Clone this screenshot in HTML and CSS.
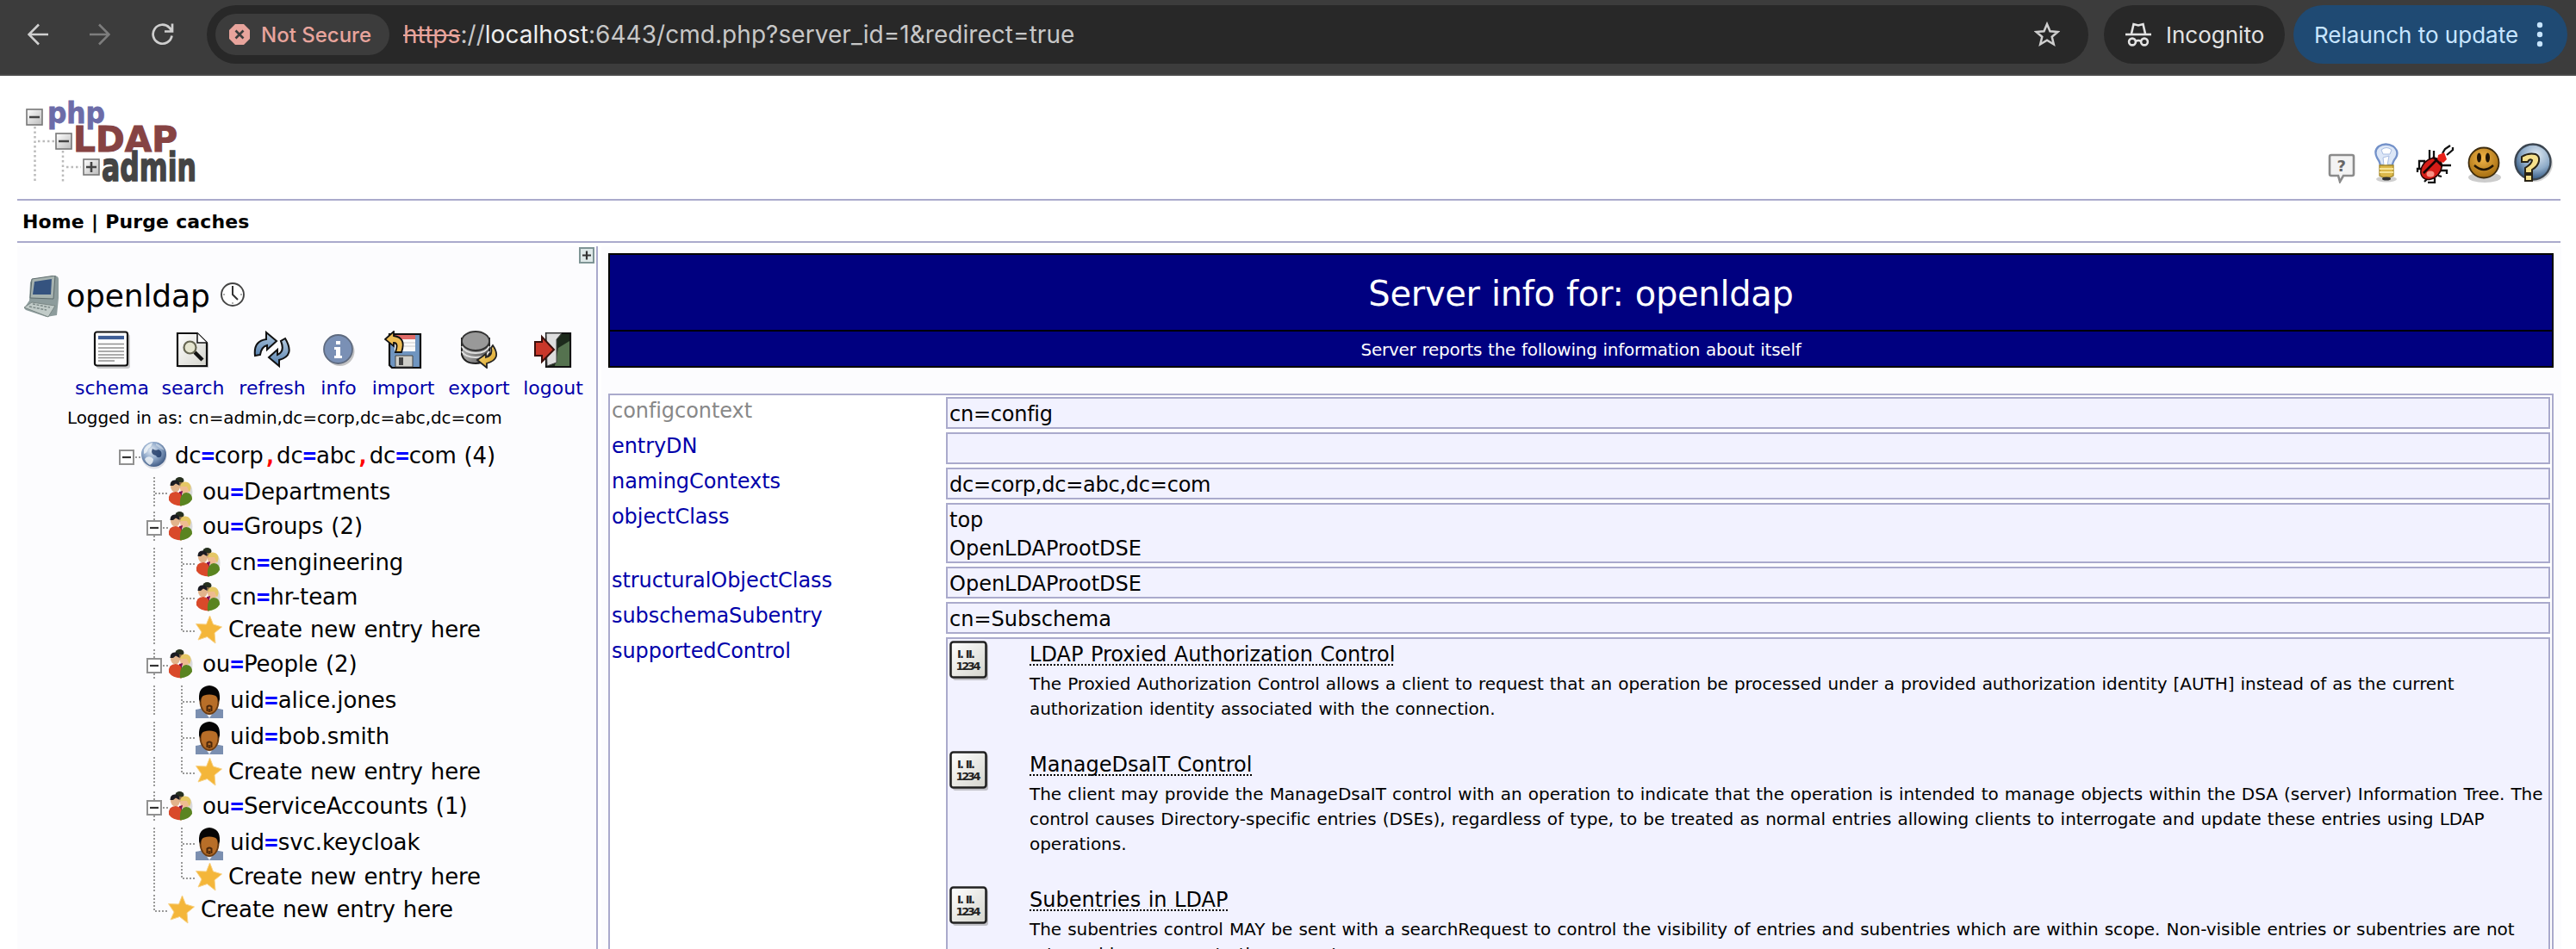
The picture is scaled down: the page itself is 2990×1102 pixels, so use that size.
FILE: index.html
```html
<!DOCTYPE html>
<html lang="en">
<head>
<meta charset="utf-8">
<title>phpLDAPadmin</title>
<link rel="stylesheet" href="styles.css">
</head>
<body>
<svg class="defs" width="0" height="0" aria-hidden="true">
  <defs>
    <linearGradient id="gPaper" x1="0" y1="0" x2="1" y2="1"><stop offset="0" stop-color="#fff"/><stop offset="1" stop-color="#d4d4cc"/></linearGradient>
    <linearGradient id="gBlue" x1="0" y1="0" x2="0" y2="1"><stop offset="0" stop-color="#b5cbe0"/><stop offset="1" stop-color="#5580ae"/></linearGradient>
    <radialGradient id="gGlobe" cx=".4" cy=".35" r=".7"><stop offset="0" stop-color="#e4ecf5"/><stop offset=".5" stop-color="#8fa8c9"/><stop offset="1" stop-color="#3a557f"/></radialGradient>
    <radialGradient id="gSmile" cx=".45" cy=".35" r=".65"><stop offset="0" stop-color="#f2b548"/><stop offset="1" stop-color="#a56d10"/></radialGradient>
    <radialGradient id="gHelp" cx=".6" cy=".3" r=".75"><stop offset="0" stop-color="#dfe9f2"/><stop offset=".55" stop-color="#8eabc8"/><stop offset="1" stop-color="#234a76"/></radialGradient>
    <linearGradient id="gYel" x1="0" y1="0" x2="1" y2="1"><stop offset="0" stop-color="#fbe08a"/><stop offset="1" stop-color="#d79d1c"/></linearGradient>
    <linearGradient id="gDisk" x1="0" y1="0" x2="1" y2="0"><stop offset="0" stop-color="#a9a9a9"/><stop offset="1" stop-color="#555"/></linearGradient>
    <linearGradient id="gBox" x1="0" y1="0" x2="1" y2="1"><stop offset="0" stop-color="#fff"/><stop offset="1" stop-color="#bbb"/></linearGradient>
    <symbol id="guide-tee" viewBox="0 0 32 34"><path d="M16 0V34M17 19H32" stroke="#999" stroke-width="2" stroke-dasharray="2 2" fill="none"/></symbol>
    <symbol id="guide-line" viewBox="0 0 32 34"><path d="M16 0V34" stroke="#999" stroke-width="2" stroke-dasharray="2 2" fill="none"/></symbol>
    <symbol id="guide-end" viewBox="0 0 32 34"><path d="M16 0V20M17 19H32" stroke="#999" stroke-width="2" stroke-dasharray="2 2" fill="none"/></symbol>
    <symbol id="guide-box" viewBox="0 0 32 34"><path d="M16 0V34M26 19H32" stroke="#999" stroke-width="2" stroke-dasharray="2 2" fill="none"/><path d="M8 11H24V27H8Z" fill="#fff" stroke="#919191" stroke-width="2"/><path d="M11 19H21" stroke="#333" stroke-width="2.2"/></symbol>
    <symbol id="guide-root" viewBox="0 0 32 34"><path d="M26 19H32" stroke="#999" stroke-width="2" stroke-dasharray="2 2" fill="none"/><path d="M8 11H24V27H8Z" fill="#fff" stroke="#919191" stroke-width="2"/><path d="M11 19H21" stroke="#333" stroke-width="2.2"/></symbol>
    <symbol id="globe" viewBox="0 0 32 34"><circle cx="16" cy="18" r="14.500" fill="#c9cdd6" opacity=".6"/><circle cx="15.500" cy="15.500" r="14.500" fill="url(#gGlobe)"/><path d="M4 10Q8 3 14 2Q13 7 9 9Q8 14 4 15ZM7 19Q12 17 15 21Q15 26 11 28Q6 25 5 21Z" fill="#f4f7fa" opacity=".8"/><path d="M14 9Q17 12 21 10Q26 12 24 18Q20 21 18 17Q13 16 13 12Z" fill="#1a3463" opacity=".8"/><path d="M18 3Q25 5 28 11Q22 9 18 5Z" fill="#e6edf5" opacity=".5"/></symbol>
    <symbol id="group" viewBox="0 0 32 34"><path d="M24 7Q30 12 28 22L22 28Z" fill="#ccc" opacity=".7"/><ellipse cx="13.500" cy="4" rx="5" ry="4" fill="#26301f"/><path d="M10 6H17V12H10Z" fill="#8c6a48"/><ellipse cx="8.500" cy="11" rx="5.500" ry="6.500" fill="#e2b48c"/><path d="M2.500 10Q2.500 3 8.500 3.500Q14 4 13.500 10L9 7.500L6 10Z" fill="#1b1b22"/><ellipse cx="19.500" cy="13" rx="5.500" ry="6.500" fill="#eebb90"/><path d="M14 11Q15 5 20.500 5.500Q27 6.500 26.500 13L25 18L22 11Z" fill="#e5c765"/><path d="M13 17L17 16L15 27L12 26Z" fill="#7c1050"/><path d="M1 27Q0 17 9 17Q16 18 16 24V33.500Q5 33 1 27Z" fill="#d9492a"/><path d="M14 33.500Q13 19 21 18Q28 18 28 26Q24 33 14 33.500Z" fill="#5a8420"/></symbol>
    <symbol id="person" viewBox="0 0 32 38"><path d="M0 38V28Q7 27 10 25H22Q25 27 32 28V38Z" fill="#7b8fb0"/><path d="M12 32L16 38L20 32Z" fill="#e8ecf2"/><ellipse cx="16" cy="18" rx="11.500" ry="16" fill="#6d3d12"/><ellipse cx="16" cy="19" rx="9.500" ry="13" fill="#b86e28"/><path d="M4 16Q3 1 16 0Q29 1 28 16L26.500 20Q26.500 13 22 11.500Q16 9.500 10 11.500Q5.500 13 5.500 20Z" fill="#060505"/><path d="M13.500 30V24.500Q16 22.500 18.500 24.500V30" fill="none" stroke="#4a260a" stroke-width="2"/><path d="M14.500 27H17.500V31H14.500Z" fill="#5a300c"/></symbol>
    <symbol id="star" viewBox="0 0 32 34"><path d="M16.500 1L20.500 11L30.500 14L22 21L23 33L13.500 25.500L3 29L7 20L0.500 10.500L12.500 11Z" fill="#f4b63a" stroke="#f8d184" stroke-width="1"/></symbol>
    <symbol id="number" viewBox="0 0 48 48"><rect x="4" y="4" width="41" height="42" rx="3" fill="#999" opacity=".55"/><rect x="1.500" y="1.500" width="41" height="41" rx="3" fill="url(#gPaper)" stroke="#222" stroke-width="2.600"/><text x="9" y="20" class="num-face" textLength="21">I. II.</text><text x="7.500" y="34" class="num-face" textLength="29">1234</text></symbol>
  </defs>
</svg>

<header class="browser">
  <div class="nav-buttons">
    <svg width="24" height="28" viewBox="0 0 24 28" fill="none" stroke="#cfcfcf" stroke-width="2.600"><path d="M24 14H2M13 2.500L1.500 14L13 25.500"/></svg>
    <svg width="24" height="28" viewBox="0 0 24 28" fill="none" stroke="#7d7d7d" stroke-width="2.600"><path d="M0 14H22M11 2.500L22.500 14L11 25.500"/></svg>
    <svg width="26" height="26" viewBox="0 0 26 26" fill="none" stroke="#cfcfcf" stroke-width="2.700"><path d="M23.500 14.500A11 11 0 1 1 20.500 5L24 9M24 0.500V9.500H15"/></svg>
  </div>
  <div class="omnibox">
    <div class="chip">
      <svg width="24" height="24" viewBox="0 0 24 24"><path d="M7 0H17L24 7V17L17 24H7L0 17V7Z" fill="#e8a49c"/><path d="M7.500 7.500L16.500 16.500M16.500 7.500L7.500 16.500" stroke="#3c3c3c" stroke-width="2.600"/></svg>
      <span>Not Secure</span>
    </div>
    <div class="url"><span class="scheme">https</span>://<span class="host">localhost</span>:6443/cmd.php?server_id=1&amp;redirect=true</div>
    <svg width="30" height="30" viewBox="0 0 30 30"><path d="M15 3L18.500 11.200L27.500 12L20.700 17.800L22.800 26.500L15 21.800L7.200 26.500L9.300 17.800L2.500 12L11.500 11.200Z" fill="none" stroke="#cfcfcf" stroke-width="2.500"/></svg>
  </div>
  <div class="pill incognito">
    <svg width="30" height="28" viewBox="0 0 30 28" fill="none" stroke="#e3e3e3" stroke-width="2.600"><path d="M0 14H30"/><path d="M7 13L9.500 2L15 3.500L20.500 2L23 13"/><circle cx="8" cy="22.500" r="3.900"/><circle cx="22" cy="22.500" r="3.900"/><path d="M12 22Q15 20 18 22"/></svg>
    <span>Incognito</span>
  </div>
  <div class="pill relaunch">
    <span>Relaunch to update</span>
    <svg width="8" height="30" viewBox="0 0 8 30" fill="#c7e5ff"><circle cx="4" cy="4" r="3.200"/><circle cx="4" cy="15" r="3.200"/><circle cx="4" cy="26" r="3.200"/></svg>
  </div>
</header>

<div class="masthead">
  <svg class="logo" width="206" height="122" viewBox="0 -10 206 122">
    <g stroke="#bbb" stroke-width="2.500" stroke-dasharray="2.500 3" fill="none"><path d="M10.500 30V96M43 58V96M14 47H34M47 77H64"/></g>
    <g fill="url(#gBox)" stroke="#777" stroke-width="1.600"><rect x="1" y="10" width="18" height="18"/><rect x="35" y="38" width="18" height="18"/><rect x="67" y="68" width="18" height="18"/></g>
    <path d="M4 19H16M38 47H50M70 77H82M76 71V83" stroke="#444" stroke-width="2.600"/>
    <text class="logo-php" x="25" y="26" textLength="67" lengthAdjust="spacingAndGlyphs">php</text>
    <text class="logo-ldap" x="55" y="59" textLength="121" lengthAdjust="spacingAndGlyphs">LDAP</text>
    <text class="logo-admin" x="88" y="93" textLength="110" lengthAdjust="spacingAndGlyphs">admin</text>
  </svg>
  <div class="head-icons">
    <svg class="hint" width="32" height="36" viewBox="0 0 32 36"><path d="M4 3H28Q30 3 30 5V25Q30 27 28 27H18L14 34L12 27H4Q2 27 2 25V5Q2 3 4 3Z" fill="#f3f3f3" stroke="#8b8b8b" stroke-width="2.600"/><text x="10.500" y="22" class="tip-mark">?</text></svg>
    <svg class="bulb" width="32" height="46" viewBox="0 0 32 46"><ellipse cx="16" cy="42" rx="12" ry="3.500" fill="#bbb" opacity=".7"/><path d="M9 26Q8 21 5 17Q1 9 7 4Q15-1 24 4Q31 10 27 17Q23 22 23 26Z" fill="#dde7f7" stroke="#7391c9" stroke-width="2.300"/><path d="M10 8Q16 3 22 8L20 13H12ZM13 26L12 17L19 15L17 26" fill="#fff" stroke="#a9bde2"/><path d="M8 26H24V38Q16 43 8 38Z" fill="#dcb84a" stroke="#a68a2d" stroke-width="1.400"/><path d="M8 30H24M8 34H24" stroke="#f6e396" stroke-width="2"/><ellipse cx="16" cy="41.500" rx="5" ry="2" fill="#333"/></svg>
    <svg class="bug" width="48" height="48" viewBox="0 0 48 48"><g stroke="#111" stroke-width="2.300" fill="none"><path d="M33 13L36 8L42 4M38 15L45 9V6M18 21V9M23 20V10M12 27V22H6V30M10 31H4V35M31 27H43M29 33H38V37M15 43L12 46M24 42V47H16M28 39L32 40"/></g><ellipse cx="20" cy="31" rx="10.500" ry="14" transform="rotate(42 20 31)" fill="#d51d18" stroke="#250303" stroke-width="1.500"/><path d="M28 15L35 12L38 20L34 24L27 21Z" fill="#e92119"/><path d="M11 36L27 20M22 17L33 28" stroke="#170404" stroke-width="2.600"/><ellipse cx="19" cy="37" rx="4.500" ry="3.500" fill="#f99185"/></svg>
    <svg class="smile" width="40" height="44" viewBox="0 0 40 44"><ellipse cx="20" cy="37" rx="19" ry="6" fill="#aaa" opacity=".6"/><circle cx="19" cy="20" r="17.500" fill="url(#gSmile)" stroke="#3d2c0e" stroke-width="1.800"/><ellipse cx="13.500" cy="14" rx="2.500" ry="5.500" fill="#221605"/><ellipse cx="23.500" cy="14" rx="2.500" ry="5.500" fill="#221605"/><path d="M8 23Q19 33 30 23" fill="none" stroke="#221605" stroke-width="2.400"/></svg>
    <svg class="help" width="48" height="48" viewBox="0 0 48 48"><circle cx="25" cy="25" r="21" fill="#bbb" opacity=".6"/><circle cx="23" cy="23" r="20.500" fill="url(#gHelp)" stroke="#3b4550" stroke-width="2.400"/><path d="M10 23V17Q18 12 26 14Q31 16 30 22Q29 28 22 32V36H14V30Q22 25 22 21Q19 19 17 23Z" fill="#f5e08c" stroke="#292315" stroke-width="2"/><rect x="14" y="38" width="8" height="7" fill="#f5e08c" stroke="#292315" stroke-width="2"/></svg>
  </div>
</div>

<nav class="menu"><a>Home</a> | <a>Purge caches</a></nav>

<div class="columns">
  <aside class="sidebar">
    <div class="expand">
      <svg width="18" height="20" viewBox="0 0 18 20"><rect x="1" y="1" width="16" height="17" fill="#dfe9e9" stroke="#7f9595" stroke-width="2"/><path d="M4 9.500H14M9 4.500V14.500" stroke="#333" stroke-width="2.200"/></svg>
    </div>
    <div class="server">
      <svg width="44" height="50" viewBox="0 0 44 50"><path d="M9 4L36 0Q40 1 40 4V26L38 46L26 48L2 40L0 38L6 29L7 8Z" fill="#8d9c9c"/><path d="M9 4L36 0L34 27L7 26Z" fill="#a7b3b0" stroke="#5d6b6c"/><path d="M12 7L32 4L31 22L10 22Z" fill="#35537f"/><path d="M0 37L9 31L36 35L28 48Z" fill="#c1cbc8" stroke="#7a8785"/><path d="M6 36L26 40M10 33L30 37" stroke="#7c8987" stroke-width="1.500" stroke-dasharray="3 1.500"/></svg>
      <span class="server-name">openldap</span>
      <svg class="clock" width="30" height="30" viewBox="0 0 30 30"><circle cx="15" cy="15" r="13" fill="#fff" stroke="#444" stroke-width="1.900"/><path d="M15 5V15L21 21" fill="none" stroke="#333" stroke-width="2"/><path d="M4 15H6M24 15H26M15 24V26" stroke="#999" stroke-width="1.500"/></svg>
    </div>
    <div class="tools">
      <a class="tool"><svg width="44" height="44" viewBox="0 0 44 44"><rect x="4" y="4" width="39" height="40" rx="3" fill="#aaa" opacity=".6"/><rect x="2" y="1.500" width="38" height="39" rx="2.500" fill="#fdfdfd" stroke="#111" stroke-width="2.200"/><path d="M6 8H36" stroke="#405f97" stroke-width="4.200"/><path d="M6 15.500H36M6 20H36M6 24H36M6 28H36M6 31.500H36M6 35H25" stroke="#909090" stroke-width="1.700"/></svg><span>schema</span></a>
      <a class="tool"><svg width="44" height="44" viewBox="0 0 44 44"><path d="M5 4H29L40 15V43H5Z" fill="#999" opacity=".5"/><path d="M4 3H27L38 14V41H4Z" fill="url(#gPaper)" stroke="#111" stroke-width="2.200"/><path d="M27 3V14H38" fill="#fff" stroke="#111" stroke-width="1.500"/><path d="M24 25L33 34" stroke="#111" stroke-width="4.500"/><circle cx="18.500" cy="19.500" r="7" fill="#e5e5cf" stroke="#666652" stroke-width="2.200"/></svg><span>search</span></a>
      <a class="tool"><svg width="44" height="44" viewBox="0 0 44 44"><path d="M2 29Q0 12 15 10V2L27 12L16 22V17Q9 19 8 28Z" fill="url(#gBlue)" stroke="#111" stroke-width="2"/><path d="M37 9Q49 29 30 34V41L18 31L28 22V28Q37 24 32 12Z" fill="url(#gBlue)" stroke="#111" stroke-width="2"/></svg><span>refresh</span></a>
      <a class="tool"><svg width="44" height="44" viewBox="0 0 44 44"><circle cx="23.500" cy="24" r="17" fill="#aaa" opacity=".7"/><circle cx="21.500" cy="21.500" r="16.500" fill="#7a90b5" stroke="#5f6b80" stroke-width="1.800"/><path d="M19 12H24V16H19ZM17 19H24V29H26V32H17V29H19V22H17Z" fill="#fff"/></svg><span>info</span></a>
      <a class="tool"><svg width="44" height="44" viewBox="0 0 44 44"><path d="M6 4H42V43H9L6 40Z" fill="#6f95c0" stroke="#111" stroke-width="2.200"/><path d="M12 5H36V24H12Z" fill="#fafafa"/><path d="M12 5H36V10H12Z" fill="#e06a67"/><path d="M13 14H36M13 18H36" stroke="#ccc"/><path d="M13 29H33V42H13Z" fill="#cfcfc9" stroke="#444"/><path d="M17 31H22V40H17Z" fill="#444"/><path d="M1 10L11 1V6Q26 8 20 25H13Q17 14 11 14V18Z" fill="#eebd55" stroke="#111" stroke-width="1.800"/></svg><span>import</span></a>
      <a class="tool"><svg width="44" height="44" viewBox="0 0 44 44"><path d="M2 9V28Q5 38 18 38Q32 37 34 28V9Z" fill="url(#gDisk)" stroke="#222" stroke-width="2"/><path d="M2 18Q6 26 18 26T34 18M2 24Q6 31 18 31T34 24" fill="none" stroke="#ddd" stroke-width="2"/><ellipse cx="18" cy="12" rx="16" ry="11" fill="#999" stroke="#333" stroke-width="1.800"/><path d="M38 17Q49 33 31 38V43L20 34L30 27V31Q38 29 36 20Z" fill="url(#gYel)" stroke="#222" stroke-width="1.800"/></svg><span>export</span></a>
      <a class="tool"><svg width="44" height="44" viewBox="0 0 44 44"><path d="M14 3H42V42H14Z" fill="#1d2a1c" stroke="#111" stroke-width="2.200"/><path d="M28 20L41 12V41H24Z" fill="#55724f"/><path d="M14 3H32L26 10V37L15 41Z" fill="#dedede" stroke="#444"/><path d="M1 13H9V7L23 22L9 36V29H1Z" fill="#c9372a" stroke="#3b100c" stroke-width="2"/></svg><span>logout</span></a>
    </div>
    <div class="login">Logged in as: cn=admin,dc=corp,dc=abc,dc=com</div>

    <div class="tree">
      <div class="row tall"><svg class="guide"><use href="#guide-root"/></svg><svg class="ico"><use href="#globe"/></svg><span class="dn base">dc<b>=</b>corp<i>,</i>dc<b>=</b>abc<i>,</i>dc<b>=</b>com (4)</span></div>
      <div class="row"><span class="indent"></span><svg class="guide"><use href="#guide-tee"/></svg><svg class="ico group"><use href="#group"/></svg><span class="dn">ou<b>=</b>Departments</span></div>
      <div class="row tall"><span class="indent"></span><svg class="guide"><use href="#guide-box"/></svg><svg class="ico group"><use href="#group"/></svg><span class="dn">ou<b>=</b>Groups (2)</span></div>
      <div class="row"><span class="indent"></span><svg class="guide"><use href="#guide-line"/></svg><svg class="guide"><use href="#guide-tee"/></svg><svg class="ico group"><use href="#group"/></svg><span class="dn">cn<b>=</b>engineering</span></div>
      <div class="row short"><span class="indent"></span><svg class="guide"><use href="#guide-line"/></svg><svg class="guide"><use href="#guide-tee"/></svg><svg class="ico group"><use href="#group"/></svg><span class="dn">cn<b>=</b>hr-team</span></div>
      <div class="row"><span class="indent"></span><svg class="guide"><use href="#guide-line"/></svg><svg class="guide"><use href="#guide-end"/></svg><svg class="ico"><use href="#star"/></svg><span class="dn create">Create new entry here</span></div>
      <div class="row tall"><span class="indent"></span><svg class="guide"><use href="#guide-box"/></svg><svg class="ico group"><use href="#group"/></svg><span class="dn">ou<b>=</b>People (2)</span></div>
      <div class="row tall"><span class="indent"></span><svg class="guide"><use href="#guide-line"/></svg><svg class="guide"><use href="#guide-tee"/></svg><svg class="ico person"><use href="#person"/></svg><span class="dn">uid<b>=</b>alice.jones</span></div>
      <div class="row mid"><span class="indent"></span><svg class="guide"><use href="#guide-line"/></svg><svg class="guide"><use href="#guide-tee"/></svg><svg class="ico person"><use href="#person"/></svg><span class="dn">uid<b>=</b>bob.smith</span></div>
      <div class="row"><span class="indent"></span><svg class="guide"><use href="#guide-line"/></svg><svg class="guide"><use href="#guide-end"/></svg><svg class="ico"><use href="#star"/></svg><span class="dn create">Create new entry here</span></div>
      <div class="row tall"><span class="indent"></span><svg class="guide"><use href="#guide-box"/></svg><svg class="ico group"><use href="#group"/></svg><span class="dn">ou<b>=</b>ServiceAccounts (1)</span></div>
      <div class="row"><span class="indent"></span><svg class="guide"><use href="#guide-line"/></svg><svg class="guide"><use href="#guide-tee"/></svg><svg class="ico person"><use href="#person"/></svg><span class="dn">uid<b>=</b>svc.keycloak</span></div>
      <div class="row short"><span class="indent"></span><svg class="guide"><use href="#guide-line"/></svg><svg class="guide"><use href="#guide-end"/></svg><svg class="ico"><use href="#star"/></svg><span class="dn create">Create new entry here</span></div>
      <div class="row"><span class="indent"></span><svg class="guide"><use href="#guide-end"/></svg><svg class="ico"><use href="#star"/></svg><span class="dn create">Create new entry here</span></div>
    </div>
  </aside>

  <main class="content">
    <h1 class="title">Server info for: openldap</h1>
    <h2 class="subtitle">Server reports the following information about itself</h2>
    <div class="info">
      <div class="attr unknown">configcontext</div><div class="value dn-value">cn=config</div>
      <div class="attr">entryDN</div><div class="value"></div>
      <div class="attr">namingContexts</div><div class="value dn-value">dc=corp,dc=abc,dc=com</div>
      <div class="attr">objectClass</div><div class="value">top<br>OpenLDAProotDSE</div>
      <div class="attr">structuralObjectClass</div><div class="value">OpenLDAProotDSE</div>
      <div class="attr">subschemaSubentry</div><div class="value">cn=Subschema</div>
      <div class="attr">supportedControl</div>
      <div class="value controls">
        <section class="control">
          <svg class="num"><use href="#number"/></svg>
          <div><h3>LDAP Proxied Authorization Control</h3>
          <p class="tight">The Proxied Authorization Control allows a client to request that an operation be processed under a provided authorization identity [AUTH] instead of as the current<br>authorization identity associated with the connection.</p></div>
        </section>
        <section class="control">
          <svg class="num"><use href="#number"/></svg>
          <div><h3>ManageDsaIT Control</h3>
          <p>The client may provide the ManageDsaIT control with an operation to indicate that the operation is intended to manage objects within the DSA (server) Information Tree. The<br>control causes Directory-specific entries (DSEs), regardless of type, to be treated as normal entries allowing clients to interrogate and update these entries using LDAP<br>operations.</p></div>
        </section>
        <section class="control">
          <svg class="num"><use href="#number"/></svg>
          <div><h3>Subentries in LDAP</h3>
          <p class="tight">The subentries control MAY be sent with a searchRequest to control the visibility of entries and subentries which are within scope. Non-visible entries or subentries are not<br>returned in response to the request.</p></div>
        </section>
      </div>
    </div>
  </main>
</div>
</body>
</html>
```
FILE: styles.css
```css
* { box-sizing: border-box; }
body {
  margin: 0;
  height: 1102px;
  overflow: hidden;
  background: #fff;
  color: #000;
  font-family: "DejaVu Sans", sans-serif;
  font-size: 24px;
}
h1, h2, h3, p { margin: 0; font-weight: normal; }
svg { display: block; flex: none; }
.defs { height: 0; overflow: hidden; }

/* browser toolbar */
.browser {
  height: 88px;
  padding: 6px 10px 12px 32px;
  display: flex;
  background: #3c3c3c;
  border-bottom: 2px solid #484848;
  font-family: Inter, sans-serif;
  white-space: nowrap;
}
.nav-buttons { width: 208px; display: flex; align-items: center; gap: 48px; }
.omnibox {
  width: 2184px;
  height: 68px;
  padding: 0 33px 0 10px;
  display: flex;
  align-items: center;
  border-radius: 34px;
  background: #282828;
}
.chip {
  width: 202px;
  height: 48px;
  padding-left: 16px;
  display: flex;
  align-items: center;
  gap: 13px;
  border-radius: 24px;
  background: #3c3c3c;
  color: #e8a49c;
  font-size: 24px;
  font-weight: 500;
}
.url { flex: 1; padding-left: 16px; font-size: 28px; color: #c7c7c7; letter-spacing: 0.05px; }
.scheme { color: #e8a49c; text-decoration: line-through; text-decoration-thickness: 2px; }
.host { color: #eee; }
.pill { height: 68px; border-radius: 34px; display: flex; align-items: center; font-size: 26px; }
.incognito { width: 210px; margin-left: 18px; padding-left: 25px; gap: 17px; background: #282828; color: #e3e3e3; }
.relaunch { width: 318px; margin-left: 10px; padding: 0 28px 0 24px; justify-content: space-between; background: #1f4a73; color: #c7e5ff; }

/* application header */
.masthead {
  height: 145px;
  margin: 0 18px 0 20px;
  padding: 19px 7px 0 10px;
  display: flex;
  justify-content: space-between;
  border-bottom: 2px solid #aaaacc;
}
.logo-php { font: bold 33px "DejaVu Sans", sans-serif; fill: #6c6ca8; stroke: #6c6ca8; stroke-width: 0.8px; }
.logo-ldap { font: bold 41px "DejaVu Sans", sans-serif; fill: #864343; stroke: #864343; stroke-width: 1px; }
.logo-admin { font: bold 46px "DejaVu Sans", sans-serif; fill: #444; stroke: #444; stroke-width: 1.6px; }
.head-icons { height: 106px; display: flex; align-items: flex-end; }
.bulb { margin: 0 16px 1px 20px; }
.smile { margin: 0 13px 0 14px; }
.tip-mark { font: bold 18px "DejaVu Sans", sans-serif; fill: #666; }
.menu {
  height: 49px;
  margin: 0 18px 0 20px;
  padding-left: 6px;
  border-bottom: 2px solid #aaaacc;
  font-size: 22px;
  font-weight: bold;
  letter-spacing: 0.1px;
  word-spacing: 0.4px;
  line-height: 49px;
}

.columns { height: 816px; margin: 4px 17px 0 20px; display: flex; gap: 4px; word-spacing: 0.034em; }
.sidebar { width: 674px; height: 100%; background: #fcfcfe; border-right: 2px solid #aaaacc; white-space: nowrap; }
.expand { height: 34px; padding: 1px 2px 0 0; display: flex; justify-content: flex-end; }
.server { height: 50px; padding-left: 8px; display: flex; align-items: flex-start; }
.server-name { width: 183px; padding-left: 5px; font-size: 36px; line-height: 47px; letter-spacing: -0.1px; }
.clock { margin-top: 7px; }
.tools { height: 100px; padding: 14px 0 0 63px; display: grid; grid-template-columns: 94px 94px 90px 64px 86px 90px 82px; }
.tool { display: flex; flex-direction: column; align-items: center; gap: 9px; color: #0000aa; font-size: 22px; line-height: 28px; }
.login { height: 42px; padding-left: 58px; font-size: 20px; line-height: 30px; letter-spacing: -0.1px; }

/* directory tree */
.tree { padding-left: 111px; }
.row { height: 40px; display: flex; align-items: flex-start; }
.row.tall { height: 42px; }
.row.mid { height: 41px; }
.row.short { height: 38px; }
.indent { width: 32px; }
.guide { width: 32px; height: 34px; }
.ico { width: 32px; height: 34px; }
.ico.person { height: 38px; }
.dn { padding-left: 8px; font-size: 26px; line-height: 34px; letter-spacing: -0.05px; }
.dn.base { letter-spacing: -0.18px; }
.dn.create { padding-left: 6px; letter-spacing: -0.08px; }
.dn b { color: #00f; font-family: "DejaVu Sans Mono", monospace; }
.dn i { color: #f00; font: bold 26px "DejaVu Sans Mono", monospace; }

/* server information */
.content { flex: 1; padding: 8px 9px 0 8px; background: #fcfcfe; }
.title, .subtitle { background: #000080; border: 2px solid #000; color: #fff; text-align: center; }
.title { height: 91px; font-size: 40px; line-height: 90px; letter-spacing: -0.3px; }
.subtitle { height: 42px; border-top: 0; font-size: 20px; line-height: 42px; letter-spacing: -0.26px; }
.info {
  height: 645px;
  margin-top: 30px;
  padding: 2px 2px 0;
  display: grid;
  grid-template-columns: 388px 1fr;
  grid-template-rows: 37px 37px 37px 70px 37px 37px 1fr;
  row-gap: 4px;
  border: 2px solid #aaaacc;
  border-bottom: 0;
  background: #fff;
}
.attr { color: #0000aa; line-height: 33px; letter-spacing: -0.07px; }
.attr.unknown { color: #888; }
.value { padding: 2px 0 0 2px; background: #f2f2ff; border: 2px solid #aaaacc; line-height: 33px; }
.dn-value { letter-spacing: -0.24px; }
.controls { min-height: 0; border-bottom: 0; overflow: hidden; }
.control { margin-bottom: 34px; display: flex; gap: 45px; white-space: nowrap; }
.num { width: 48px; height: 48px; }
.num-face { font: bold 13px "DejaVu Sans", sans-serif; fill: #222; }
.control h3 {
  font-size: 24px;
  line-height: 33px;
  letter-spacing: 0.03px;
  text-decoration: underline dotted 2px;
  text-underline-offset: 3px;
  text-decoration-skip-ink: none;
}
.control p { margin-top: 3px; font-size: 20px; line-height: 29px; letter-spacing: -0.032px; }
.control p.tight { letter-spacing: -0.055px; }
```
